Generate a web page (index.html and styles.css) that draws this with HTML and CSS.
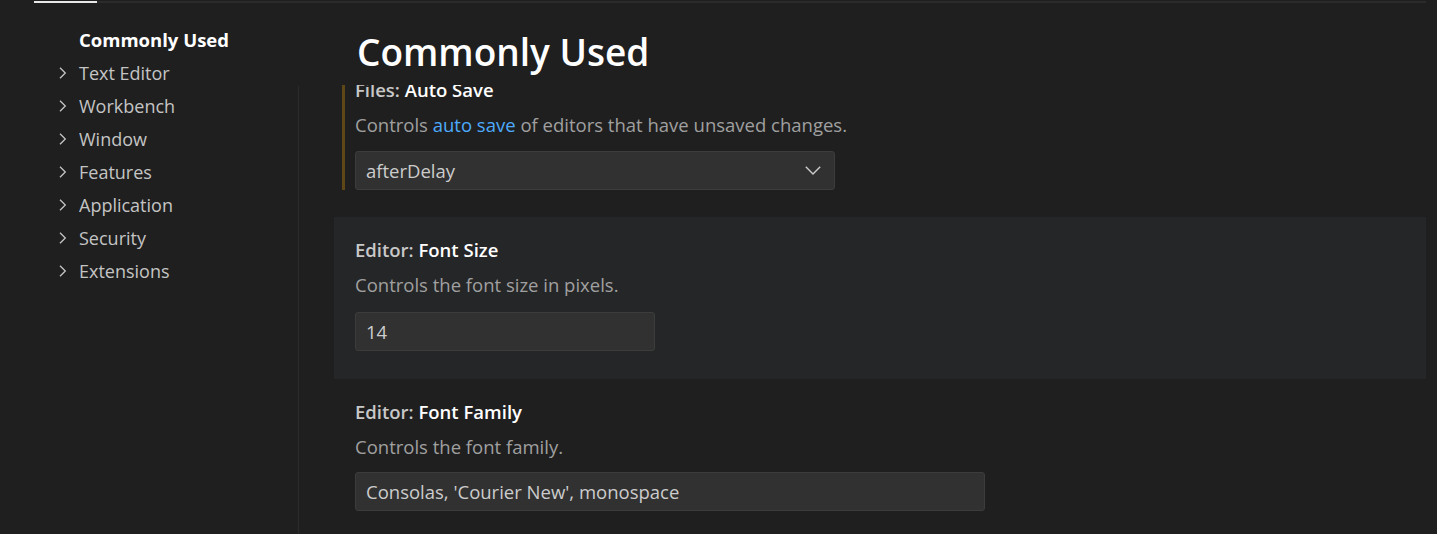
FILE: index.html
```html
<!DOCTYPE html>
<html lang="en">
<head>
<meta charset="utf-8">
<title>Settings</title>
<link rel="stylesheet" href="styles.css">
</head>
<body>
<div class="tabbar">
  <div class="tab-spacer"></div>
  <div class="tab-active"></div>
  <div class="tab-rest"></div>
</div>
<div class="page">
  <nav class="toc">
    <div class="toc-item selected"><span class="toc-icon"></span><span class="toc-label">Commonly Used</span></div>
    <div class="toc-item"><span class="toc-icon"><svg width="8" height="12" viewBox="0 0 8 12"><polyline points="1,0.7 6.3,6 1,11.3" fill="none" stroke="#c5c5c5" stroke-width="1.3"/></svg></span><span class="toc-label">Text Editor</span></div>
    <div class="toc-item"><span class="toc-icon"><svg width="8" height="12" viewBox="0 0 8 12"><polyline points="1,0.7 6.3,6 1,11.3" fill="none" stroke="#c5c5c5" stroke-width="1.3"/></svg></span><span class="toc-label">Workbench</span></div>
    <div class="toc-item"><span class="toc-icon"><svg width="8" height="12" viewBox="0 0 8 12"><polyline points="1,0.7 6.3,6 1,11.3" fill="none" stroke="#c5c5c5" stroke-width="1.3"/></svg></span><span class="toc-label">Window</span></div>
    <div class="toc-item"><span class="toc-icon"><svg width="8" height="12" viewBox="0 0 8 12"><polyline points="1,0.7 6.3,6 1,11.3" fill="none" stroke="#c5c5c5" stroke-width="1.3"/></svg></span><span class="toc-label">Features</span></div>
    <div class="toc-item"><span class="toc-icon"><svg width="8" height="12" viewBox="0 0 8 12"><polyline points="1,0.7 6.3,6 1,11.3" fill="none" stroke="#c5c5c5" stroke-width="1.3"/></svg></span><span class="toc-label">Application</span></div>
    <div class="toc-item"><span class="toc-icon"><svg width="8" height="12" viewBox="0 0 8 12"><polyline points="1,0.7 6.3,6 1,11.3" fill="none" stroke="#c5c5c5" stroke-width="1.3"/></svg></span><span class="toc-label">Security</span></div>
    <div class="toc-item"><span class="toc-icon"><svg width="8" height="12" viewBox="0 0 8 12"><polyline points="1,0.7 6.3,6 1,11.3" fill="none" stroke="#c5c5c5" stroke-width="1.3"/></svg></span><span class="toc-label">Extensions</span></div>
  </nav>
  <div class="divider"></div>
  <main class="settings">
    <header class="settings-header">
      <h1 class="category-title">Commonly Used</h1>
    </header>
    <div class="scroller">
      <div class="list">
        <section class="setting modified">
          <div class="setting-title"><span class="cat">Files: </span><span class="key">Auto Save</span></div>
          <div class="setting-desc">Controls <span class="link">auto save</span> of editors that have unsaved changes.</div>
          <div class="select">
            <span class="value">afterDelay</span>
            <svg class="select-chevron" width="16" height="9" viewBox="0 0 16 9"><polyline points="0.8,0.8 8,8 15.2,0.8" fill="none" stroke="#cccccc" stroke-width="1.4"/></svg>
          </div>
        </section>
        <section class="setting focused">
          <div class="setting-title"><span class="cat">Editor: </span><span class="key">Font Size</span></div>
          <div class="setting-desc">Controls the font size in pixels.</div>
          <div class="input short"><span class="value">14</span></div>
        </section>
        <section class="setting">
          <div class="setting-title"><span class="cat">Editor: </span><span class="key">Font Family</span></div>
          <div class="setting-desc">Controls the font family.</div>
          <div class="input long tight"><span class="value">Consolas, 'Courier New', monospace</span></div>
        </section>
      </div>
    </div>
  </main>
</div>
</body>
</html>
```

FILE: styles.css
```css
* { box-sizing: border-box; }
html, body {
  margin: 0;
  padding: 0;
  height: 100%;
  background: #1f1f1f;
  overflow: hidden;
  font-family: "Open Sans", "Noto Sans", sans-serif;
  color: #cccccc;
}
.tabbar {
  display: flex;
  height: 2px;
  margin-top: 1px;
}
.tab-spacer { width: 34px; }
.tab-active { width: 63px; background: #e8e8e8; }
.tab-rest { width: 1329px; background: #2b2b2b; }

.page {
  display: grid;
  grid-template-columns: 298px 1px 1127px;
  height: 531px;
}
.toc {
  padding-top: 20px;
  display: flex;
  flex-direction: column;
}
.toc-item {
  display: flex;
  align-items: center;
  height: 33px;
  font-size: 18px;
  color: #c4c4c4;
  white-space: nowrap;
}
.toc-icon {
  width: 79px;
  padding-left: 59px;
  display: flex;
  align-items: center;
}
.toc-item.selected { color: #ffffff; font-weight: 700; font-size: 18.5px; }

.divider {
  margin-top: 83px;
  background: #2b2b2b;
}

.settings {
  display: flex;
  flex-direction: column;
  min-width: 0;
}
.settings-header {
  height: 82px;
  padding-left: 58px;
  display: flex;
  align-items: center;
}
.category-title {
  margin: 0;
  font-size: 37px;
  font-weight: 600;
  color: #ffffff;
  line-height: 1;
  padding-top: 14px;
}
.scroller {
  flex: 1;
  overflow: hidden;
  padding-left: 35px;
}
.list { margin-top: -30px; }

.setting {
  height: 162px;
  padding: 18px 21px 0 21px;
  position: relative;
}
.setting:first-child { padding-top: 20px; }
.setting.focused { background: #252627; }
.setting.modified::before {
  content: "";
  position: absolute;
  left: 8px;
  top: 18px;
  bottom: 27px;
  width: 3px;
  background: #5e4716;
}
.setting-title {
  font-size: 18.5px;
  line-height: 30px;
  font-weight: 600;
  white-space: nowrap;
}
.setting-title .cat { color: #c8c8c8; }
.setting-title .key { color: #ffffff; }
.setting-desc {
  margin-top: 6px;
  font-size: 18.5px;
  line-height: 28px;
  color: #a0a0a0;
  white-space: nowrap;
}
.link { color: #4daafc; }

.select, .input {
  margin-top: 13px;
  height: 39px;
  background: #313131;
  border: 1px solid #3c3c3c;
  border-radius: 3px;
  display: flex;
  align-items: center;
  padding: 0 12px 0 10px;
  font-size: 18.5px;
  color: #cccccc;
}
.setting:first-child .select { margin-top: 12px; }
.select { width: 480px; justify-content: space-between; }
.select-chevron { margin-right: 1px; }
.input.short { width: 300px; }
.input.long { width: 630px; }
.input.tight { margin-top: 11px; }
```
